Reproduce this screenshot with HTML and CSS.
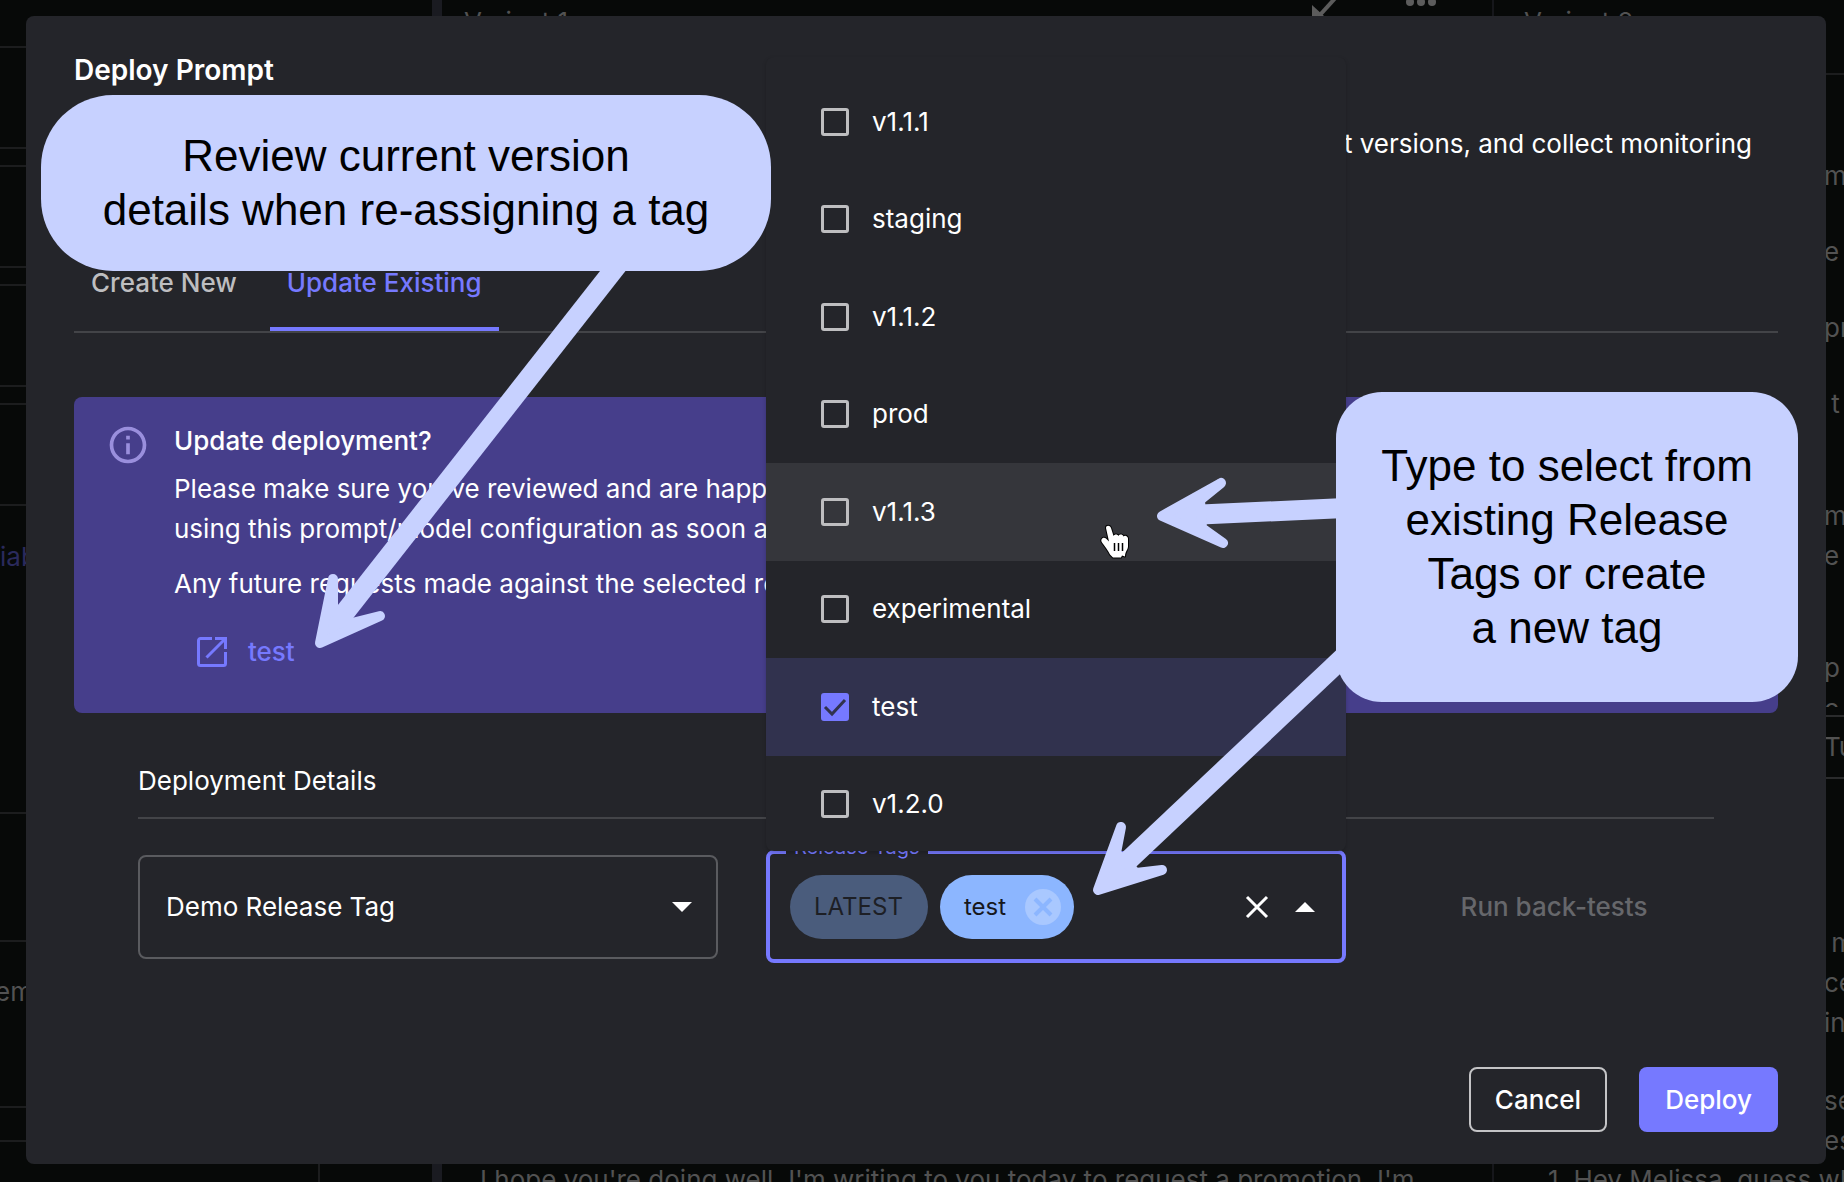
FILE: index.html
```html
<!DOCTYPE html>
<html lang="en">
<head>
<meta charset="utf-8">
<title>Deploy Prompt</title>
<link rel="stylesheet" href="styles.css">
</head>
<body>
<div class="stage">
  <div class="workspace" aria-hidden="true">
    <div class="sidebar">
      <div class="side-top"></div>
      <div class="side-card"></div>
      <div class="side-card"></div>
      <div class="side-card"></div>
      <div class="side-card"></div>
      <div class="side-block side-variable">iable</div>
      <div class="side-block side-line"></div>
      <div class="side-block side-name">em</div>
      <div class="side-block side-strip"></div>
      <div class="side-foot"></div>
    </div>
    <div class="divider"></div>
    <div class="variant">
      <div class="variant-head">
        <span>Variant 1</span>
        <span class="variant-tools">
          <svg width="28" height="28" viewBox="0 0 28 28"><path d="M0 17v11h12z" fill="#5c5c5c"/><path d="M27 6 7 28" fill="none" stroke="#5c5c5c" stroke-width="4"/></svg>
          <svg width="32" height="28" viewBox="0 0 32 28"><g fill="#5c5c5c"><circle cx="4" cy="14" r="4"/><circle cx="15" cy="14" r="4"/><circle cx="26" cy="14" r="4"/></g></svg>
        </span>
      </div>
      <p class="variant-output">I hope you're doing well. I'm writing to you today to request a promotion. I'm</p>
    </div>
    <div class="variant variant-last">
      <div class="variant-head"><span>Variant 2</span></div>
      <div class="edge">
        <span class="edge-a">m</span>
        <span class="edge-b">e c</span>
        <span class="edge-b">pro</span>
        <span class="edge-b">&nbsp;t</span>
        <span class="edge-c">mp</span>
        <span class="edge-d">e</span>
        <span class="edge-c">p</span>
        <span class="edge-clip">c</span>
        <span class="edge-cell">Tu</span>
        <span class="edge-e">&nbsp;m</span>
        <span class="edge-d">ce</span>
        <span class="edge-d">in</span>
        <span class="edge-f">se</span>
        <span class="edge-d">es</span>
      </div>
      <p class="variant-output">1. Hey Melissa, guess what</p>
    </div>
  </div>

  <div class="overlay">
    <form class="dialog" role="dialog" aria-labelledby="dialog-title">
      <h1 class="dialog-title" id="dialog-title">Deploy Prompt</h1>
      <p class="dialog-text">prompt versions, and collect monitoring</p>

      <div class="tabs" role="tablist">
        <button class="tab" type="button" role="tab" aria-selected="false">Create New</button>
        <button class="tab tab-active" type="button" role="tab" aria-selected="true">Update Existing</button>
      </div>

      <section class="alert">
        <svg class="alert-icon" viewBox="0 0 24 24" width="44" height="44"><path fill="#9a8fdd" d="M11 7h2v2h-2zm0 4h2v6h-2zm1-9C6.480 2 2 6.480 2 12s4.480 10 10 10 10-4.480 10-10S17.520 2 12 2zm0 18c-4.410 0-8-3.590-8-8s3.590-8 8-8 8 3.590 8 8-3.590 8-8 8z"/></svg>
        <div class="alert-body">
          <h2 class="alert-title">Update deployment?</h2>
          <p class="alert-text">Please make sure you've reviewed and are happy<br>using this prompt/model configuration as soon as</p>
          <p class="alert-text">Any future requests made against the selected release</p>
          <a class="alert-link" href="#test">
            <svg viewBox="0 0 30 30" width="30" height="30"><path fill="none" stroke="#7679ff" stroke-width="3" d="M15 1.500H3.500a2 2 0 0 0-2 2v23a2 2 0 0 0 2 2h23a2 2 0 0 0 2-2V15M18 1.500h10.500V12M28 2 9.500 20.500"/></svg>
            test
          </a>
        </div>
      </section>

      <section class="details">
        <h2 class="details-title">Deployment Details</h2>
        <div class="fields">
          <div class="select-box">
            <select class="select" aria-label="Deployment"><option>Demo Release Tag</option></select>
            <svg class="select-arrow" width="20" height="10" viewBox="0 0 20 10"><path d="M0 0h20L10 10z" fill="#fff"/></svg>
          </div>

          <div class="tag-field">
            <fieldset class="tag-outline">
              <legend class="tag-legend">Release Tags</legend>
            </fieldset>
            <div class="tag-content">
              <span class="chip chip-disabled">LATEST</span>
              <span class="chip">test
                <button class="chip-remove" type="button" aria-label="Remove test"><svg width="36" height="36" viewBox="0 0 36 36"><circle cx="18" cy="18" r="18" fill="#a9c8ff"/><path d="M10 10l16 16M26 10L10 26" stroke="#8cb6ff" stroke-width="4"/></svg></button>
              </span>
              <input class="tag-input" type="text" aria-label="Release Tags">
              <button class="icon-button" type="button" aria-label="Clear"><svg width="24" height="24" viewBox="0 0 24 24"><path d="M2 2l20 20M22 2L2 22" stroke="#fff" stroke-width="3"/></svg></button>
              <button class="icon-button" type="button" aria-label="Close"><svg width="20" height="10" viewBox="0 0 20 10"><path d="M0 10h20L10 0z" fill="#fff"/></svg></button>
            </div>
            <div class="menu">
              <ul class="menu-list">
                <li class="option"><label><span class="box"><input type="checkbox"></span>v1.1.1</label></li>
                <li class="option"><label><span class="box"><input type="checkbox"></span>staging</label></li>
                <li class="option"><label><span class="box"><input type="checkbox"></span>v1.1.2</label></li>
                <li class="option"><label><span class="box"><input type="checkbox"></span>prod</label></li>
                <li class="option option-hover"><label><span class="box"><input type="checkbox"></span>v1.1.3</label></li>
                <li class="option"><label><span class="box"><input type="checkbox"></span>experimental</label></li>
                <li class="option option-selected"><label><span class="box"><input type="checkbox" checked><svg width="28" height="28" viewBox="0 0 28 28"><path d="M4 14l7 7L24 7" fill="none" stroke="#31324e" stroke-width="3"/></svg></span>test</label></li>
                <li class="option"><label><span class="box"><input type="checkbox"></span>v1.2.0</label></li>
              </ul>
            </div>
          </div>

          <button class="text-button" type="button" disabled>Run back-tests</button>
        </div>
      </section>

      <div class="actions">
        <button class="button button-outline" type="button">Cancel</button>
        <button class="button button-primary" type="submit">Deploy</button>
      </div>
    </form>
  </div>

  <svg class="annotations" width="1844" height="1182" viewBox="0 0 1844 1182" aria-hidden="true">
    <g fill="#fff" stroke="#000" stroke-width="2" stroke-linejoin="round">
      <path d="M1106 528c0-3 4-3 5 0l2.500 8c1-2 4-2 5 0 1-2 4-2 5 .5 1-1.500 4-1 4.500 2v8c0 3-3 5-3 10l-3-1-1 2h-8l-3-3c-2-4-5-8-8-12-2-3 1-6 4-4l3 3z" paint-order="stroke"/>
      <path d="M1114.500 543v8M1118.500 543v8M1122.500 543v8" fill="none" stroke-width="1.500"/>
    </g>
    <g fill="#c7d1ff" stroke="#c7d1ff" stroke-linejoin="round">
      <path d="M630 249L335 625" stroke-width="20"/>
      <path d="M333 579L320 643L380 616L352 623L333 610Z" stroke-width="10"/>
      <path d="M1345 508L1190 515" stroke-width="20"/>
      <path d="M1221 483L1162 516L1223 543L1202 528L1200 500Z" stroke-width="10"/>
      <path d="M1350 651L1116 872" stroke-width="20"/>
      <path d="M1121 827L1098 890L1162 870L1136 873L1116 853Z" stroke-width="10"/>
    </g>
  </svg>
  <div class="callout callout-review">Review current version<br>details when re-assigning a tag</div>
  <div class="callout callout-type">Type to select from<br>existing Release<br>Tags or create<br>a new tag</div>
</div>
</body>
</html>
```
FILE: styles.css
```css
* {
  box-sizing: border-box;
}

body {
  margin: 0;
  background: #070908;
  color: #fff;
  font: 400 26px/40px Inter, "Liberation Sans", sans-serif;
}

h1, h2, p, ul, fieldset {
  margin: 0;
  padding: 0;
}

button, input, select {
  font: inherit;
  color: inherit;
  background: none;
  border: 0;
  padding: 0;
}

svg {
  display: block;
}

.stage {
  position: relative;
  display: grid;
  height: 100vh;
  overflow: hidden;
}

.workspace,
.overlay {
  grid-area: 1 / 1;
  min-height: 0;
  min-width: 0;
}

/* Workspace behind the dialog */
.workspace {
  display: grid;
  grid-template-columns: 432px 10px minmax(0, 1fr) 352px;
  height: 100vh;
  overflow: hidden;
  color: #525252;
}

.divider {
  background: #1a1b21;
}

.side-top {
  height: 46px;
}

.side-card {
  height: 103px;
  margin-bottom: 16px;
  border: 2px solid #1c1d1e;
  border-width: 2px 0;
}

.side-block {
  border-bottom: 2px solid #1c1d1e;
}

.side-variable {
  height: 292px;
  padding-top: 15px;
  color: #2a2a5c;
}

.side-line {
  height: 128px;
}

.side-name {
  height: 166px;
  padding-top: 30px;
  text-indent: -5px;
}

.side-strip {
  height: 34px;
}

.side-foot {
  width: 320px;
  height: 40px;
  border-right: 2px solid #1c1d1e;
}

.variant {
  display: flex;
  flex-direction: column;
  justify-content: space-between;
  overflow: hidden;
}

.variant-last {
  border-left: 2px solid #16171b;
}

.variant-head {
  display: flex;
  flex: none;
  justify-content: space-between;
  height: 75px;
  padding: 2px 54px 0 22px;
}

.variant-last .variant-head {
  padding-left: 30px;
  border-bottom: 2px solid #1c1d1e;
}

.variant-tools {
  display: flex;
  gap: 66px;
  margin-top: -14px;
}

.variant-output {
  flex: none;
  height: 22px;
  padding-left: 38px;
  white-space: nowrap;
}

.variant-last .variant-output {
  padding-left: 54px;
}

.edge {
  display: flex;
  flex-direction: column;
  align-self: flex-end;
  flex: 1;
  width: 20px;
  min-height: 0;
  white-space: nowrap;
}

.edge > * {
  flex: none;
}

.edge-a { margin-top: 81px; }
.edge-b { margin-top: 36px; }
.edge-c { margin-top: 72px; }
.edge-d { margin-top: 0; }
.edge-e { margin-top: 144px; }
.edge-f { margin-top: 38px; }

.edge-clip {
  height: 12px;
  margin-top: 7px;
  overflow: hidden;
  line-height: 28px;
}

.edge-cell {
  height: 64px;
  margin-top: 8px;
  border: 2px solid #2a2b2c;
  border-width: 2px 0;
  line-height: 60px;
}

/* Dialog */
.overlay {
  display: grid;
  padding: 16px 18px 18px 26px;
}

.dialog {
  position: relative;
  display: flex;
  flex-direction: column;
  min-width: 0;
  padding: 34px 48px 32px;
  border-radius: 8px;
  background: #24252a;
}

.dialog-title {
  font-size: 28px;
  font-weight: 600;
}

.dialog-text {
  min-height: 80px;
  margin: 34px 0 31px;
  padding-right: 26px;
  text-align: right;
}

.tabs {
  display: flex;
  gap: 16px;
  border-bottom: 2px solid #434448;
}

.tab {
  height: 96px;
  padding: 4px 17px 0;
  border-bottom: 4px solid transparent;
  color: #bebec0;
  font-weight: 500;
}

.tab-active {
  border-color: #7679ff;
  color: #7679ff;
}

.alert {
  display: flex;
  gap: 24px;
  margin-top: 64px;
  padding: 24px 32px 41px;
  border-radius: 8px;
  background: #463e8b;
}

.alert-icon {
  margin-top: 2px;
}

.alert-title {
  font-size: 26px;
  font-weight: 500;
}

.alert-text {
  margin-top: 8px;
}

.alert-text + .alert-text {
  margin-top: 15px;
}

.alert-link {
  display: flex;
  align-items: center;
  gap: 21px;
  margin: 28px 0 0 23px;
  color: #7679ff;
  font-weight: 500;
  text-decoration: none;
}

.details {
  margin-top: 48px;
  padding: 0 64px;
}

.details-title {
  padding-bottom: 16px;
  border-bottom: 2px solid #434448;
  font-size: 26px;
  font-weight: 400;
}

.fields {
  display: grid;
  grid-template-columns: minmax(0, 29fr) minmax(0, 29fr) minmax(0, 16fr);
  gap: 48px;
  align-items: center;
  margin-top: 32px;
}

.select-box {
  display: grid;
  align-items: center;
}

.select {
  grid-area: 1 / 1;
  height: 104px;
  padding: 0 26px;
  border: 2px solid #5a5b5f;
  border-radius: 8px;
  appearance: none;
}

.select-arrow {
  grid-area: 1 / 1;
  justify-self: end;
  margin-right: 26px;
  pointer-events: none;
}

.tag-field {
  position: relative;
  display: grid;
  grid-template-columns: minmax(0, 1fr);
  height: 112px;
}

.tag-outline {
  position: absolute;
  inset: -19px 0 0;
  padding: 0 16px;
  border: 4px solid #7679ff;
  border-radius: 8px;
}

.tag-legend {
  padding: 0 8px 10px;
  color: #7679ff;
  font-size: 20px;
  line-height: 30px;
}

.tag-content {
  display: flex;
  align-items: center;
  gap: 12px;
  padding: 0 31px 0 24px;
}

.chip {
  display: flex;
  align-items: center;
  gap: 19px;
  height: 64px;
  padding: 0 13px 0 24px;
  border-radius: 32px;
  background: #8cb6ff;
  color: #17181c;
  font-size: 24px;
}

.chip-disabled {
  padding-right: 25px;
  background: #4a5c7c;
  color: #1d1f25;
}

.tag-input {
  flex: 1;
  width: 0;
  min-width: 0;
  outline: 0;
}

.icon-button {
  margin-left: 14px;
}

.text-button {
  color: #66676b;
  font-weight: 500;
}

.menu {
  position: absolute;
  right: 0;
  bottom: 100%;
  left: 0;
  height: 794px;
  padding-top: 16px;
  overflow: hidden;
  border-radius: 8px;
  background: #24252a;
  box-shadow: 0 2px 4px rgba(0, 0, 0, 0.2);
}

.menu-list {
  display: flex;
  flex-direction: column;
  height: 780px;
  list-style: none;
}

.option {
  flex: 1;
  display: grid;
}

.option label {
  display: flex;
  align-items: center;
  gap: 23px;
  padding: 0 55px;
}

.option-hover {
  background: #35363b;
}

.option-selected {
  background: #31324e;
}

.box {
  display: grid;
}

.box > * {
  grid-area: 1 / 1;
}

.box input {
  width: 28px;
  height: 28px;
  margin: 0;
  border: 3px solid #bebec0;
  border-radius: 3px;
  appearance: none;
}

.box input:checked {
  border-color: #7679ff;
  background: #7679ff;
}

.box svg {
  position: relative;
}

.actions {
  display: flex;
  justify-content: flex-end;
  gap: 32px;
  margin-top: auto;
}

.button {
  height: 65px;
  padding: 0 26px;
  border-radius: 8px;
  font-weight: 500;
}

.button-outline {
  padding: 0 24px;
  border: 2px solid #c4c4c6;
}

.button-primary {
  background: #7679ff;
}

/* Annotations laid over the page */
.annotations {
  position: absolute;
  top: 0;
  left: 0;
}

.callout {
  position: absolute;
  display: grid;
  place-content: center;
  background: #c7d1ff;
  color: #000;
  font: 400 44px/54px "Liberation Sans", sans-serif;
  text-align: center;
  white-space: nowrap;
}

.callout-review {
  top: 95px;
  left: 41px;
  width: 730px;
  height: 176px;
  border-radius: 72px;
}

.callout-type {
  top: 392px;
  left: 1336px;
  width: 462px;
  height: 310px;
  border-radius: 46px;
}
```
